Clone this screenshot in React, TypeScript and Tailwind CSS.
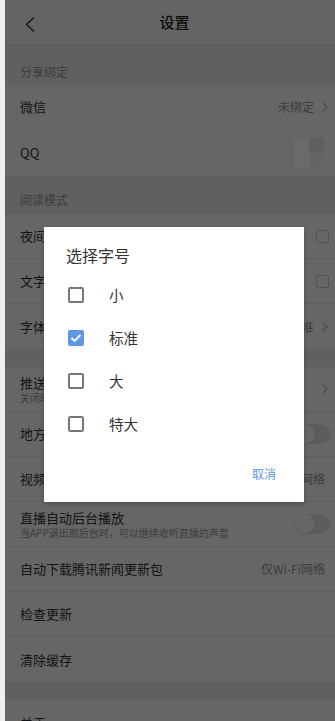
import React from 'react'

const font = "font-['Noto_Sans_CJK_SC','Noto_Sans',sans-serif]"

function Chevron() {
  return (
    <svg width="6" height="10" viewBox="0 0 6 10" className="ml-[8px] shrink-0">
      <path d="M1 1 L5 5 L1 9" fill="none" stroke="#b5b5b5" strokeWidth="1.1" />
    </svg>
  )
}

function Toggle() {
  return (
    <div className="relative h-[20px] w-[35px] rounded-full bg-[#e6e6e6]">
      <div className="absolute left-0 top-0 h-[20px] w-[20px] rounded-full bg-white shadow-[0_1px_2px_rgba(0,0,0,0.15)]" />
    </div>
  )
}

function Box() {
  return <div className="h-[13px] w-[13px] rounded-[2px] border border-[#cfcfcf] bg-white" />
}

function Section({ title, h, pt }: { title: string; h: string; pt: string }) {
  return (
    <div className={`${h} ${pt} bg-[#f0f0f0] px-[15px] text-[12px] leading-[17px] text-[#999]`}>{title}</div>
  )
}

function Gap() {
  return <div className="h-[18px] bg-[#f0f0f0]" />
}

type RowProps = {
  label: string
  sub?: string
  value?: string
  chevron?: boolean
  right?: React.ReactNode
  pr?: string
  last?: boolean
}

function Row({ label, sub, value, chevron, right, pr = 'pr-[7px]', last }: RowProps) {
  return (
    <div className={`flex h-[45px] items-center justify-between pl-[15px] ${pr} ${last ? '' : 'border-b border-[#eeeeee]'}`}>
      <div className="flex min-w-0 flex-col">
        <span className="whitespace-nowrap text-[13px] leading-[16px] text-[#333]">{label}</span>
        {sub && <span className="whitespace-nowrap text-[10px] leading-[13px] text-[#999]">{sub}</span>}
      </div>
      <div className="flex items-center">
        {value && <span className="whitespace-nowrap text-[12px] text-[#999]">{value}</span>}
        {chevron && <Chevron />}
        {right}
      </div>
    </div>
  )
}

const OPTIONS = [
  { label: '小', checked: false },
  { label: '标准', checked: true },
  { label: '大', checked: false },
  { label: '特大', checked: false },
]

export default function App() {
  return (
    <div className={`flex h-[721px] overflow-hidden bg-[#efefef] ${font}`}>
      <div className="w-[5px] shrink-0" />
      <div className="relative flex-1 overflow-hidden bg-white">
        {/* Header */}
        <div className="relative flex h-[45px] items-center justify-center border-b border-[#e2e2e2] bg-[#fafafa] pl-[9px]">
          <svg width="10" height="15" viewBox="0 0 10 15" className="absolute left-[20px] top-[17px]">
            <path d="M9 0.5 L1.5 7.5 L9 14.5" fill="none" stroke="#333" strokeWidth="1.3" />
          </svg>
          <span className="text-[15px] font-medium text-[#222]">设置</span>
        </div>

        <Section title="分享绑定" h="h-[40px]" pt="pt-[18px]" />
        <Row label="微信" value="未绑定" chevron />
        <Row label="QQ" last />

        <Section title="阅读模式" h="h-[39px]" pt="pt-[16px]" />
        <Row label="夜间模式" right={<Box />} pr="pr-[6px]" />
        <Row label="文字模式" right={<Box />} pr="pr-[6px]" />
        <Row label="字体大小" value="标准" chevron last />

        <Gap />
        <Row label="推送通知" sub="关闭时将不会收到推送" chevron />
        <Row label="地方新闻推送" right={<Toggle />} pr="pr-[5px]" />
        <Row label="视频自动播放" value="仅Wi-Fi网络" pr="pr-[10px]" />
        <Row label="直播自动后台播放" sub="当APP退出到后台时，可以继续收听直播的声音" right={<Toggle />} pr="pr-[5px]" />
        <Row label="自动下载腾讯新闻更新包" value="仅Wi-Fi网络" pr="pr-[10px]" />
        <Row label="检查更新" />
        <Row label="清除缓存" last />
        <Gap />
        <Row label="关于" last />

        {/* Dim overlay */}
        <div className="absolute inset-0 bg-black/60" />

        {/* faint artifact over QQ row */}
        <div className="absolute left-[289px] top-[138px] flex h-[30px] w-[30px] bg-white/[0.03]">
          <div className="w-[15px]" />
          <div className="flex w-[15px] flex-col">
            <div className="h-[15px] bg-black/[0.1]" />
            <div className="h-[15px] bg-black/[0.05]" />
          </div>
        </div>

        {/* Dialog */}
        <div className="absolute left-[39px] top-[227px] flex h-[275px] w-[260px] flex-col bg-white pt-[17px] shadow-[0_2px_4px_rgba(0,0,0,0.25)]">
          <div className="pl-[22px] text-[16px] leading-[22px] text-[#333]">选择字号</div>
          <div className="mt-[7px] flex flex-col">
            {OPTIONS.map((o) => (
              <div key={o.label} className="flex h-[43px] items-center pl-[24px]">
                {o.checked ? (
                  <div className="flex h-[16px] w-[16px] items-center justify-center rounded-[2px] bg-[#5f97e2]">
                    <svg width="12" height="10" viewBox="0 0 12 10">
                      <path d="M1.5 5 L4.5 8 L10.5 2" fill="none" stroke="white" strokeWidth="1.8" />
                    </svg>
                  </div>
                ) : (
                  <div className="h-[16px] w-[16px] rounded-[2px] border-2 border-[#777]" />
                )}
                <span className="ml-[25px] text-[14.5px] text-[#333]">{o.label}</span>
              </div>
            ))}
          </div>
          <div className="mt-[20px] flex justify-end pr-[28px]">
            <span className="text-[12px] leading-[17px] text-[#5f97e2]">取消</span>
          </div>
        </div>
      </div>
    </div>
  )
}
